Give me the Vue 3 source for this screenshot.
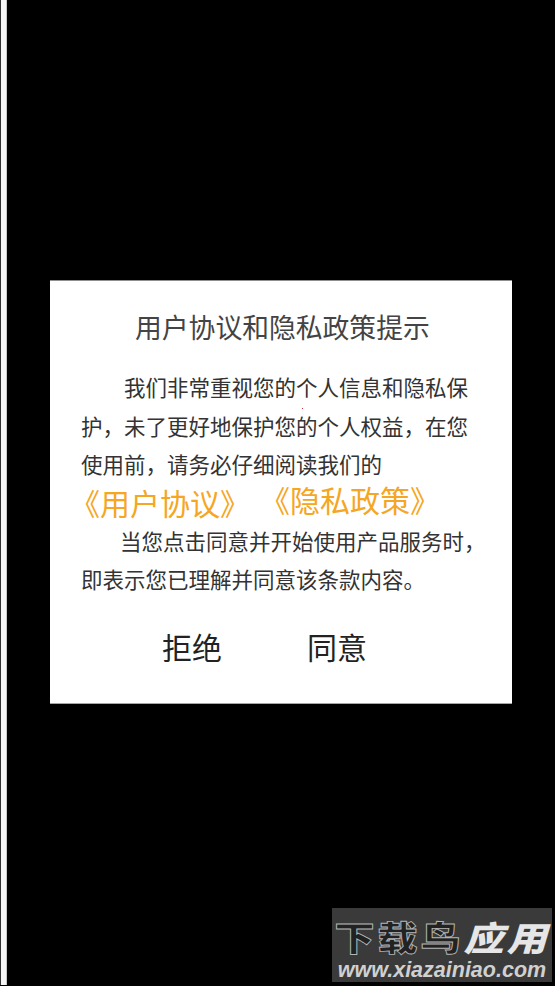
<script setup>
const bodyTop = ['我们非常重视您的个人信息和隐私保', '护，未了更好地保护您的个人权益，在您', '使用前，请务必仔细阅读我们的']
const bodyEnd = ['当您点击同意并开始使用产品服务时，', '即表示您已理解并同意该条款内容。']
</script>

<template>
  <div class="screen">
    <div class="stripe"></div>
    <main class="stage">
      <section class="dialog">
        <span class="speck"></span>
        <h1 class="title">用户协议和隐私政策提示</h1>
        <div class="copy">
          <p v-for="(line, i) in bodyTop" :key="line" class="line" :class="{ indent: i === 0 }">{{ line }}</p>
        </div>
        <div class="links">
          <a class="link">《用户协议》</a>
          <a class="link second">《隐私政策》</a>
        </div>
        <div class="copy end">
          <p v-for="(line, i) in bodyEnd" :key="line" class="line" :class="{ indentb: i === 0 }">{{ line }}</p>
        </div>
        <div class="actions">
          <button class="action">拒绝</button>
          <button class="action">同意</button>
        </div>
      </section>
    </main>
    <div class="mark">
      <div class="mark-name"><span class="hollow">下载鸟</span><b class="solid">应用</b></div>
      <div class="mark-url">www.xiazainiao.com</div>
    </div>
  </div>
</template>

<style>
html, body { margin: 0; background: #000; }
</style>

<style scoped>
.screen {
  position: relative;
  width: 555px;
  height: 986px;
  overflow: hidden;
  display: flex;
  background: #000;
  font-family: "Noto Sans CJK SC", "Liberation Sans", sans-serif;
}
.stripe {
  width: 5px;
  height: 985px;
  flex: none;
  background: #f6f6f6;
  border-left: 1px solid #333;
  border-right: 1px solid #c8c8c8;
}
.stage { flex: 1; padding: 280px 0 0 43px; }
.dialog {
  position: relative;
  width: 462px;
  height: 424px;
  box-sizing: border-box;
  background: #fff;
  border-top: 1px solid #8f8f8f;
  border-bottom: 1px solid #a5a5a5;
  padding: 27px 0 0 31px;
  color: #333;
}
.speck { position: absolute; left: 252px; top: 127px; width: 1px; height: 1px; background: #c33; }
.title {
  margin: 0;
  padding-left: 54px;
  font-size: 26.8px;
  font-weight: 400;
  line-height: 38px;
  color: #444;
}
.copy { margin-top: 22px; }
.end { margin-top: 2px; }
.line {
  margin: 0;
  font-size: 21.5px;
  line-height: 38.5px;
  white-space: nowrap;
}
.indent { padding-left: 43px; }
.indentb { padding-left: 39px; }
.links { display: flex; margin-top: 0; margin-left: -11px; height: 36px; }
.link { font-size: 30px; line-height: 36px; color: #f5a623; white-space: nowrap; }
.second { margin-left: 10px; margin-top: -3px; }
.actions { display: flex; gap: 85px; margin: 26px 0 0 81px; }
.action {
  padding: 0;
  border: 0;
  background: none;
  font: inherit;
  font-size: 30px;
  line-height: 42px;
  color: #222;
}
.mark {
  position: absolute;
  left: 332px;
  top: 908px;
  width: 220px;
  height: 74px;
  box-sizing: border-box;
  padding-top: 10px;
  background: #3a3a3a;
  text-align: center;
}
.mark-name {
  font-size: 40px;
  line-height: 38px;
  height: 38px;
  font-weight: 900;
  letter-spacing: 3px;
  white-space: nowrap;
  transform: scaleY(.85);
}
.hollow { color: #222; -webkit-text-stroke: 1px #b5b5b5; }
.solid { color: #e6e6e6; font-style: italic; }
.mark-url {
  margin-top: 2px;
  font: italic 700 21.5px/24px "Liberation Sans", sans-serif;
  color: #d0d0d0;
  white-space: nowrap;
}
</style>
